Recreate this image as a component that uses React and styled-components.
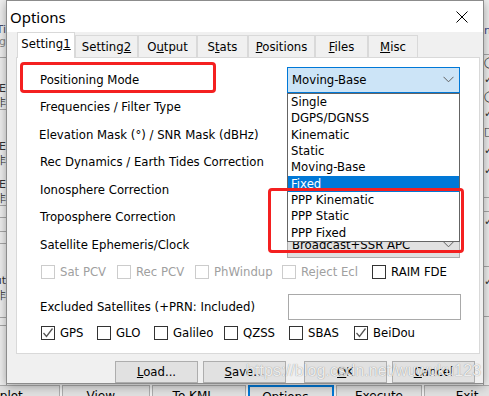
import React from 'react';
import styled, { createGlobalStyle } from 'styled-components';

const UI = `"DejaVu Sans", "Liberation Sans", sans-serif`;

const Global = createGlobalStyle`
  html, body { margin: 0; padding: 0; }
  body { width: 489px; height: 396px; overflow: hidden; background: #f0f0f0; font-family: ${UI}; }
`;

const Screen = styled.div`
  position: relative;
  width: 489px;
  height: 396px;
  overflow: hidden;
  background: #f0f0f0;
  font-family: ${UI};
`;

/* ---------- application behind the dialog ---------- */
const BgApp = styled.div`
  display: flex;
  flex-direction: column;
  width: 489px;
`;
const BgBody = styled.div`
  height: 385px;
  display: flex;
  justify-content: space-between;
`;
const BgSide = styled.div`
  width: ${p => p.$w}px;
  display: flex;
  flex-direction: column;
  overflow: hidden;
  border-${p => p.$edge}: 1px solid #a0a0a0;
`;
const BgCell = styled.div`
  height: ${p => p.$h}px;
  box-sizing: border-box;
  border-bottom: ${p => (p.$line ? '1px solid #a8a8a8' : 'none')};
  font-size: 11px;
  line-height: ${p => p.$h}px;
  color: ${p => p.$c || '#333'};
  white-space: nowrap;
  text-align: ${p => p.$align || 'right'};
  direction: ${p => (p.$align === 'left' ? 'ltr' : 'rtl')};
`;
const BgToolbar = styled.div`
  display: flex;
  gap: 2px;
  margin-left: -26px;
  height: 24px;
`;
const BgButton = styled.div`
  flex: none;
  width: ${p => p.$w}px;
  height: 22px;
  box-sizing: border-box;
  border: ${p => (p.$focus ? '2px solid #0078d7' : '1px solid #adadad')};
  background: #e1e1e1;
  font-size: 12px;
  line-height: 20px;
  text-align: center;
  color: #000;
`;

/* ---------- dialog window ---------- */
const Dialog = styled.div`
  position: absolute;
  left: 6px;
  top: 0;
  width: 478px;
  height: 384px;
  box-sizing: border-box;
  border: 1px solid #8c8c8c;
  background: #f0f0f0;
  box-shadow: 0 2px 10px rgba(0, 0, 0, 0.35);
  display: flex;
  flex-direction: column;
`;
const TitleBar = styled.div`
  height: 31px;
  background: #fff;
  display: flex;
  align-items: center;
  justify-content: space-between;
  padding: 0 15px 0 3px;
`;
const Title = styled.div`
  font-family: "Noto Sans", "Open Sans", sans-serif;
  font-size: 15px;
  color: #000;
`;
const Body = styled.div`
  flex: 1;
  display: flex;
  flex-direction: column;
  padding: 0 3px 0 9px;
`;
const TabStrip = styled.div`
  display: flex;
  align-items: flex-end;
  height: 26px;
  margin: 0 0 -1px 1px;
`;
const Tab = styled.div`
  flex: none;
  width: ${p => p.$w}px;
  height: ${p => (p.$active ? 26 : 23)}px;
  box-sizing: border-box;
  border: 1px solid #d9d9d9;
  border-bottom: none;
  background: ${p => (p.$active ? '#fff' : '#f0f0f0')};
  position: ${p => (p.$active ? 'relative' : 'static')};
  z-index: ${p => (p.$active ? 1 : 'auto')};
  font-size: 11.7px;
  line-height: ${p => (p.$active ? 22 : 22)}px;
  text-align: center;
  color: #000;
  & u { text-underline-offset: 1px; }
`;
const Panel = styled.div`
  position: relative;
  height: 297px;
  box-sizing: border-box;
  border: 1px solid #d9d9d9;
  background: #fff;
  padding: 8px 0 0 0;
`;
const FormGrid = styled.div`
  display: grid;
  grid-template-columns: 247px 173px;
  grid-auto-rows: 27.5px;
  align-items: center;
  padding-left: ${p => p.$pad}px;
`;
const Label = styled.div`
  font-size: 11.7px;
  color: ${p => (p.$disabled ? '#a0a0a0' : '#000')};
  white-space: nowrap;
  margin-left: ${p => p.$shift || 0}px;
`;
const ComboWrap = styled.div`
  position: relative;
  z-index: ${p => (p.$open ? 5 : 'auto')};
`;
const Combo = styled.div`
  height: 26px;
  box-sizing: border-box;
  border: 1px solid ${p => (p.$focused ? '#0078d7' : '#adadad')};
  background: ${p => (p.$focused ? '#cce4f7' : '#e1e1e1')};
  display: flex;
  align-items: center;
  justify-content: space-between;
  padding: 0 5px 0 4px;
  font-size: 11.7px;
  color: #000;
  white-space: nowrap;
  overflow: hidden;
`;
const DropList = styled.div`
  position: absolute;
  top: 100%;
  left: 0;
  right: 0;
  box-sizing: border-box;
  border: 1px solid #646464;
  background: #fff;
  display: flex;
  flex-direction: column;
`;
const DropItem = styled.div`
  height: 16.4px;
  line-height: 16.4px;
  padding-left: 3px;
  font-size: 11.7px;
  background: ${p => (p.$sel ? '#0078d7' : '#fff')};
  color: ${p => (p.$sel ? '#fff' : '#000')};
  white-space: nowrap;
`;
const CheckRow = styled.div`
  display: flex;
  align-items: center;
  height: ${p => p.$h}px;
  margin-top: ${p => p.$mt || 0}px;
  padding-left: 24px;
`;
const CheckItem = styled.label`
  flex: none;
  width: ${p => (p.$w ? `${p.$w}px` : 'auto')};
  display: flex;
  align-items: center;
  gap: 5px;
  font-size: 11.7px;
  color: ${p => (p.$disabled ? '#a0a0a0' : '#000')};
  white-space: nowrap;
`;
const Box = styled.span`
  flex: none;
  width: 14px;
  height: 14px;
  box-sizing: border-box;
  border: 1px solid ${p => (p.$disabled ? '#cccccc' : '#333333')};
  background: #fff;
  display: flex;
  align-items: center;
  justify-content: center;
`;
const ExcludedRow = styled.div`
  display: flex;
  align-items: center;
  height: 26px;
  margin-top: 8px;
  padding-left: 23px;
`;
const TextInput = styled.div`
  margin-left: auto;
  margin-right: 18px;
  width: 173px;
  height: 26px;
  box-sizing: border-box;
  border: 1px solid #a9a9a9;
  background: #fff;
`;
const Annotation = styled.div`
  position: absolute;
  left: ${p => p.$x}px;
  top: ${p => p.$y}px;
  width: ${p => p.$w}px;
  height: ${p => p.$h}px;
  box-sizing: border-box;
  border: 3px solid #f42020;
  border-radius: 4px;
  z-index: 10;
  pointer-events: none;
`;
const ButtonRow = styled.div`
  display: flex;
  justify-content: flex-end;
  gap: 18px;
  margin-top: 7px;
  padding-right: 5px;
`;
const ButtonGroup = styled.div`
  display: flex;
  gap: 5px;
`;
const Button = styled.div`
  width: 83px;
  height: 22px;
  box-sizing: border-box;
  border: 1px solid #adadad;
  background: #e1e1e1;
  font-size: 11.7px;
  line-height: 20px;
  text-align: center;
  color: #000;
  & u { text-underline-offset: 1px; }
`;
const Watermark = styled.div`
  position: absolute;
  left: 246px;
  top: 362px;
  font-family: "Liberation Sans", Arial, sans-serif;
  font-size: 16px;
  letter-spacing: 0.1px;
  color: rgba(255, 255, 255, 0.85);
  text-shadow: 0 0 1px rgba(0, 0, 0, 0.45);
  white-space: nowrap;
  z-index: 20;
`;

const Chevron = () => (
  <svg width="11" height="7" viewBox="0 0 11 7">
    <path d="M0.5 0.8 L5.5 5.8 L10.5 0.8" fill="none" stroke="#606060" strokeWidth="1" />
  </svg>
);

const CloseIcon = () => (
  <svg width="12" height="12" viewBox="0 0 12 12">
    <path d="M0.5 0.5 L11.5 11.5 M11.5 0.5 L0.5 11.5" stroke="#000" strokeWidth="1" />
  </svg>
);

const Tick = () => (
  <svg width="12" height="12" viewBox="0 0 12 12">
    <path d="M1.5 6 L4.5 9.5 L10.5 1.5" fill="none" stroke="#555" strokeWidth="1.3" />
  </svg>
);

const Check = ({ label, w, disabled, checked }) => (
  <CheckItem $w={w} $disabled={disabled}>
    <Box $disabled={disabled}>{checked && <Tick />}</Box>
    {label}
  </CheckItem>
);

const tabs = [
  { key: 's1', label: <>Setting<u>1</u></>, w: 58, active: true },
  { key: 's2', label: <>Setting<u>2</u></>, w: 63 },
  { key: 'o', label: <>O<u>u</u>tput</>, w: 59 },
  { key: 'st', label: <>S<u>t</u>ats</>, w: 51 },
  { key: 'p', label: <><u>P</u>ositions</>, w: 67 },
  { key: 'f', label: <><u>F</u>iles</>, w: 53 },
  { key: 'm', label: <><u>M</u>isc</>, w: 50 },
];

const modes = [
  'Single', 'DGPS/DGNSS', 'Kinematic', 'Static', 'Moving-Base', 'Fixed',
  'PPP Kinematic', 'PPP Static', 'PPP Fixed',
];

const rows = [
  { label: 'Positioning Mode', value: 'Moving-Base', open: true },
  { label: 'Frequencies / Filter Type', value: 'L1+L2' },
  { label: 'Elevation Mask (°) / SNR Mask (dBHz)', value: '15', shift: -1 },
  { label: 'Rec Dynamics / Earth Tides Correction', value: 'OFF' },
  { label: 'Ionosphere Correction', value: 'Broadcast' },
  { label: 'Troposphere Correction', value: 'Saastamoinen' },
  { label: 'Satellite Ephemeris/Clock', value: 'Broadcast+SSR APC' },
];

const leftBg = [
  { h: 24 }, { h: 12, t: 'Ti', c: '#4a4a6a' }, { h: 12, t: 'g', c: '#888' },
  { h: 10, line: true }, { h: 24 }, { h: 14, t: 'E' }, { h: 14, t: '非', line: true },
  { h: 30 }, { h: 14, t: 'E' }, { h: 14, t: '非' }, { h: 10 }, { h: 14, t: 'E' },
  { h: 14, t: '非', line: true }, { h: 12, line: true }, { h: 14, line: true },
  { h: 12, line: true }, { h: 30 }, { h: 14, t: 'ut' }, { h: 16, t: '非' },
  { h: 14, line: true }, { h: 8, line: true }, { h: 20 },
];
const rightBg = [
  { h: 26 }, { h: 12, t: 'ni', c: '#3a4a8a' }, { h: 18, line: true },
  { h: 16, t: '◯' }, { h: 18, t: '✓' }, { h: 16, t: '◯' }, { h: 18, t: '✓' },
  { h: 18, t: '□' }, { h: 20, t: '✓' }, { h: 20, t: '✓' }, { h: 18, line: true },
  { h: 14, line: true }, { h: 20, t: '✓' }, { h: 36, line: true }, { h: 30, t: '✓' },
  { h: 20, line: true }, { h: 70 },
];

export default function App() {
  return (
    <Screen>
      <Global />
      <BgApp>
        <BgBody>
          <BgSide $w={6} $edge="right">
            {leftBg.map((r, i) => (
              <BgCell key={i} $h={r.h} $line={r.line} $c={r.c}>{r.t}</BgCell>
            ))}
          </BgSide>
          <BgSide $w={5} $edge="left">
            {rightBg.map((r, i) => (
              <BgCell key={i} $h={r.h} $line={r.line} $c={r.c} $align="left">{r.t}</BgCell>
            ))}
          </BgSide>
        </BgBody>
        <BgToolbar>
          <BgButton $w={86}>plot...</BgButton>
          <BgButton $w={88}>View...</BgButton>
          <BgButton $w={94}>To KML...</BgButton>
          <BgButton $w={86} $focus>Options...</BgButton>
          <BgButton $w={86}>Execute</BgButton>
          <BgButton $w={86}>Exit</BgButton>
        </BgToolbar>
      </BgApp>

      <Dialog>
        <TitleBar>
          <Title>Options</Title>
          <CloseIcon />
        </TitleBar>
        <Body>
          <TabStrip>
            {tabs.map(t => (
              <Tab key={t.key} $w={t.w} $active={t.active}>{t.label}</Tab>
            ))}
          </TabStrip>
          <Panel>
            <Annotation $x={3} $y={4} $w={196} $h={31} />
            <Annotation $x={251} $y={130} $w={196} $h={65} />
            <FormGrid $pad={23}>
              {rows.map(r => (
                <React.Fragment key={r.label}>
                  <Label $shift={r.shift}>{r.label}</Label>
                  <ComboWrap $open={r.open}>
                    <Combo $focused={r.open}>
                      <span>{r.value}</span>
                      <Chevron />
                    </Combo>
                    {r.open && (
                      <DropList>
                        {modes.map(m => (
                          <DropItem key={m} $sel={m === 'Fixed'}>{m}</DropItem>
                        ))}
                      </DropList>
                    )}
                  </ComboWrap>
                </React.Fragment>
              ))}
            </FormGrid>
            <CheckRow $h={27.5}>
              <Check label="Sat PCV" w={76} disabled />
              <Check label="Rec PCV" w={78} disabled />
              <Check label="PhWindup" w={87} disabled />
              <Check label="Reject Ecl" w={90} disabled />
              <Check label="RAIM FDE" />
            </CheckRow>
            <ExcludedRow>
              <Label>Excluded Satellites (+PRN: Included)</Label>
              <TextInput />
            </ExcludedRow>
            <CheckRow $h={26}>
              <Check label="GPS" w={56} checked />
              <Check label="GLO" w={57} />
              <Check label="Galileo" w={70} />
              <Check label="QZSS" w={65} />
              <Check label="SBAS" w={65} />
              <Check label="BeiDou" checked />
            </CheckRow>
          </Panel>
          <ButtonRow>
            <ButtonGroup>
              <Button><u>L</u>oad...</Button>
              <Button><u>S</u>ave...</Button>
            </ButtonGroup>
            <ButtonGroup>
              <Button><u>O</u>K</Button>
              <Button><u>C</u>ancel</Button>
            </ButtonGroup>
          </ButtonRow>
        </Body>
      </Dialog>
      <Watermark>https://blog.csdn.net/wuwuku123</Watermark>
    </Screen>
  );
}
